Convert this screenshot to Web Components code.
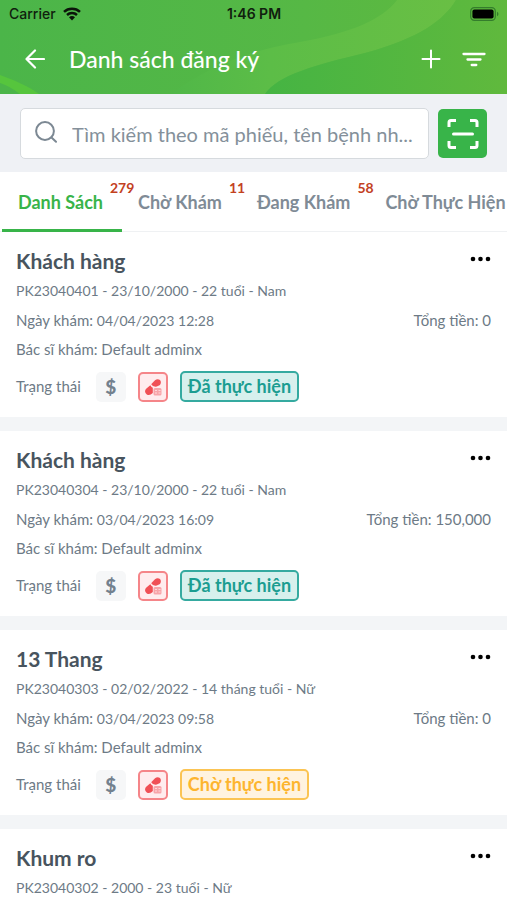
<!DOCTYPE html>
<html lang="vi">
<head>
<meta charset="utf-8">
<meta name="viewport" content="width=device-width, initial-scale=1">
<title>Danh sách đăng ký</title>
<style>
html, body { margin: 0; height: 100%; }
body { font-family: Lato, "Noto Sans", sans-serif; background: #f3f5f7; color: #6d7a86; overflow: hidden; }
</style>
</head>
<body>
<registration-screen></registration-screen>
<script>
const define = (name, html, setup) => {
  const template = document.createElement('template');
  template.innerHTML = html;
  customElements.define(name, class extends HTMLElement {
    constructor() {
      super();
      this.attachShadow({ mode: 'open' }).append(template.content.cloneNode(true));
    }
    connectedCallback() { if (setup) setup(this, this.shadowRoot); }
  });
};

define('status-bar', `
<style>
:host { display: grid; grid-template-columns: 1fr auto 1fr; align-items: center; height: 28px; padding: 0 8px 0 9px; font: 500 14px/28px Inter, sans-serif; color: #10200e; }
.left { display: flex; align-items: center; gap: 7px; }
.time { font-weight: 600; }
.battery { justify-self: end; }
svg { display: block; }
</style>
<span class="left"><span>Carrier</span>
<svg width="18" height="14" viewBox="0 0 18 14" aria-hidden="true"><g fill="none" stroke="#0b140a" stroke-width="2.5"><path d="M1 4.8C5.4.6 12.6.6 17 4.8"/><path d="M4 8c2.8-2.6 7.2-2.6 10 0"/></g><path d="M6 10.2c1.7-1.5 4.3-1.5 6 0L9 13.4z" fill="#0b140a"/></svg></span>
<span class="time">1:46 PM</span>
<svg class="battery" width="29" height="14" viewBox="0 0 29 14" aria-hidden="true"><rect x=".7" y=".7" width="24.6" height="12.6" rx="3.6" fill="none" stroke="#347d2c" stroke-width="1.2"/><rect x="2.4" y="2.4" width="21.2" height="9.2" rx="2" fill="#000"/><path d="M27 4.8c2 .8 2 3.6 0 4.4z" fill="#347d2c"/></svg>`);

define('app-header', `
<style>
:host { display: block; position: relative; height: 94px; overflow: hidden; color: #fff; background: linear-gradient(90deg, #4bb549, #56b845 60%, #60b93d); }
.art { position: absolute; inset: 0; width: 100%; height: 100%; }
status-bar, nav { position: relative; }
nav { display: flex; align-items: center; height: 62px; padding: 0 21px 0 25px; }
h1 { flex: 1; margin: 0 0 0 24px; font-size: 23px; line-height: 30px; font-weight: 500; }
button { display: block; border: 0; padding: 0; background: none; color: inherit; }
button + button { margin-left: 21px; }
svg { display: block; }
</style>
<svg class="art" viewBox="0 0 507 94" preserveAspectRatio="none" aria-hidden="true">
<defs><linearGradient id="band" x1="0" x2="1"><stop offset="0" stop-color="#50b748"/><stop offset=".35" stop-color="#5cbd47"/><stop offset="1" stop-color="#69bf44"/></linearGradient>
<linearGradient id="low" x1="0" x2="1"><stop offset="0" stop-color="#45b443"/><stop offset="1" stop-color="#60b93d"/></linearGradient></defs>
<path d="M170 94C205 70 240 52 300 42C350 33 382 20 397 0H456C444 20 420 38 365 53C315 65 278 75 265 94Z" fill="url(#band)"/>
<path d="M265 94C278 75 315 65 365 53C420 38 444 20 456 0H507V94Z" fill="url(#low)"/>
<path d="M0 75C14 80 28 86 39 94H20C12 88 6 85 0 83Z" fill="#56c53d"/>
</svg>
<status-bar></status-bar>
<nav>
<button aria-label="Quay lại"><svg width="20" height="20" viewBox="0 0 20 20" fill="none" stroke="#fff" stroke-width="2.2" stroke-linecap="round" stroke-linejoin="round"><path d="M19 10H2M10 1.5 1.5 10 10 18.500"/></svg></button>
<h1><slot></slot></h1>
<button aria-label="Thêm"><svg width="20" height="20" viewBox="0 0 20 20" stroke="#fff" stroke-width="2" stroke-linecap="round"><path d="M10 1.500V18.500M1.500 10H18.500"/></svg></button>
<button aria-label="Lọc"><svg width="24" height="20" viewBox="0 0 24 20" stroke="#fff" stroke-width="2.300" stroke-linecap="round"><path d="M1.500 5H22.500M5.500 10.500H18.500M9.700 16H14.300"/></svg></button>
</nav>`);

define('search-bar', `
<style>
:host { display: flex; gap: 9px; padding: 14px 20px 13px 20px; background: #eff1f5; }
label { flex: 1; min-width: 0; display: flex; align-items: center; gap: 15px; box-sizing: border-box; height: 51px; padding: 0 8px 0 14px; background: #fff; border: 1px solid #d6dade; border-radius: 5px; }
label svg { flex: none; margin-bottom: 4px; }
input { flex: 1; min-width: 0; border: 0; padding: 0; outline: 0; background: none; font: 400 20px/28px Lato, "Noto Sans", sans-serif; text-overflow: ellipsis; }
input::placeholder { color: #84909a; opacity: 1; }
button { display: grid; place-items: center; width: 49px; height: 49px; margin-top: 1px; border: 0; border-radius: 5px; padding: 0; background: #38b449; }
</style>
<label><svg width="22" height="22" viewBox="0 0 22 22" fill="none" stroke="#7c8893" stroke-width="2" stroke-linecap="round" aria-hidden="true"><circle cx="10" cy="10" r="8.900"/><path d="m16.500 16.500 4.500 4.300"/></svg>
<input type="text" aria-label="Tìm kiếm" placeholder="Tìm kiếm theo mã phiếu, tên bệnh nh..."></label>
<button aria-label="Quét mã"><svg width="32" height="32" viewBox="0 0 32 32" fill="none" stroke="#fff" stroke-width="3"><path d="M2 9V4.500Q2 2.500 4 2.500H9M23 2.500h5q2 0 2 2V9M30 23v4.500q0 2-2 2H23M9 29.500H4q-2 0-2-2V23"/><path d="M6.500 16H25.500" stroke-linecap="round"/></svg></button>`);

define('tab-item', `
<style>
:host { display: block; flex: none; }
button { display: block; height: 60px; border: 0; border-bottom: 3px solid transparent; padding: 0 19px 0 16px; background: none; font: 700 18px/60px Lato, "Noto Sans", sans-serif; color: #7f8b96; white-space: nowrap; }
:host([selected]) button { color: #38b449; border-color: #38b449; }
.label { position: relative; }
.count { position: absolute; left: 100%; bottom: 16px; margin-left: 7px; font: 700 14px/18px Lato, sans-serif; color: #c3411f; }
.count:empty { display: none; }
</style>
<button role="tab"><span class="label"><slot></slot><span class="count"></span></span></button>`,
(host, root) => {
  root.querySelector('.count').textContent = host.getAttribute('count') || '';
  root.querySelector('button').setAttribute('aria-selected', host.hasAttribute('selected'));
});

define('tab-strip', `
<style>:host { display: flex; flex: none; height: 60px; padding-left: 2px; overflow: hidden; background: #fff; box-shadow: inset 0 -1px #eff1f3; }</style><slot></slot>`);

define('status-badge', `
<style>
:host { display: block; box-sizing: border-box; height: 31px; padding: 0 6px; border: 2px solid #35aaa0; border-radius: 5px; background: #d7f0ed; color: #1b9d91; font-size: 18px; font-weight: 700; line-height: 27px; white-space: nowrap; }
:host([kind="waiting"]) { border-color: #fbc453; background: #fff3e0; color: #fdb52e; }
</style><slot></slot>`);

define('patient-card', `
<style>
:host { display: block; padding: 14px 16px 15px 16px; background: #fff; font-size: 15px; line-height: 29px; }
:host([summary]) { padding-bottom: 0; }
header, .visit, .status { display: flex; align-items: center; justify-content: space-between; }
h2 { margin: 0; font-size: 21px; line-height: 30px; font-weight: 700; color: #48545e; }
header button { display: block; border: 0; padding: 0 0 4px; background: none; }
svg { display: block; }
.info, .date { font-size: 14px; }
section { padding-top: 1px; }
.status { justify-content: flex-start; gap: 12px; margin-top: 7px; }
.status > span:first-child { margin-right: 3px; }
.icon { display: grid; place-items: center; box-sizing: border-box; width: 30px; height: 30px; border-radius: 5px; background: #f6f7f8; }
.pill { border: 2px solid #f58589; background: #ffecee; }
.dollar { font: 900 19px/30px Lato, sans-serif; color: #73818e; }
</style>
<header><h2><slot name="name"></slot></h2><button aria-label="Tùy chọn"><svg width="21" height="6" viewBox="0 0 21 6"><circle cx="3" cy="3" r="2.300"/><circle cx="10.500" cy="3" r="2.300"/><circle cx="18" cy="3" r="2.300"/></svg></button></header>
<div class="info"><slot name="info"></slot></div>
<section>
<div class="visit"><span>Ngày khám: <span class="date"><slot name="date"></slot></span></span><span>Tổng tiền: <slot name="total"></slot></span></div>
<div>Bác sĩ khám: <slot name="doctor"></slot></div>
<div class="status"><span>Trạng thái</span><span class="icon dollar">$</span>
<span class="icon pill"><svg width="18" height="18" viewBox="0 0 18 18" aria-hidden="true"><g fill="#f05056"><path d="M7.200 6.200 11 2.300Q13.500.2 16 2.100 17.800 4.300 16 7L12.800 8.500Q8.800 9.200 7.200 6.200Z"/><path d="M6.300 7.200Q7.500 9.300 8.800 9.800V15Q5.800 18 2.800 16.500-.2 14 1.900 11Z"/></g><rect x="9.500" y="10" width="8" height="7.500" rx="1.500" fill="#f7a4a9"/><path d="M11 12.500h2M14.500 12.500h2M11 15h2M14.500 15h2" stroke="#ffd8db"/></svg></span>
<slot name="badge"></slot></div>
</section>`,
(host, root) => { if (host.hasAttribute('summary')) root.querySelector('section')?.remove(); });

define('registration-screen', `
<style>
:host { display: flex; flex-direction: column; height: 100vh; overflow: hidden; }
app-header, search-bar { flex: none; }
main { flex: 1; min-height: 0; overflow: hidden; display: flex; flex-direction: column; gap: 14px; }
patient-card { flex: none; }
</style>
<app-header>Danh sách đăng ký</app-header>
<search-bar></search-bar>
<tab-strip role="tablist"><tab-item selected count="279">Danh Sách</tab-item><tab-item count="11">Chờ Khám</tab-item><tab-item count="58">Đang Khám</tab-item><tab-item>Chờ Thực Hiện</tab-item></tab-strip>
<main></main>`,
(host, root) => {
  const rows = [
    { name: 'Khách hàng', info: 'PK23040401 - 23/10/2000 - 22 tuổi - Nam', date: '04/04/2023 12:28', total: '0', kind: 'done' },
    { name: 'Khách hàng', info: 'PK23040304 - 23/10/2000 - 22 tuổi - Nam', date: '03/04/2023 16:09', total: '150,000', kind: 'done' },
    { name: '13 Thang', info: 'PK23040303 - 02/02/2022 - 14 tháng tuổi - Nữ', date: '03/04/2023 09:58', total: '0', kind: 'waiting' },
    { name: 'Khum ro', info: 'PK23040302 - 2000 - 23 tuổi - Nữ' },
  ];
  const labels = { done: 'Đã thực hiện', waiting: 'Chờ thực hiện' };
  const details = r => `<span slot="date">${r.date}</span><span slot="total">${r.total}</span><span slot="doctor">Default adminx</span><status-badge slot="badge" kind="${r.kind}">${labels[r.kind]}</status-badge>`;
  root.querySelector('main').innerHTML = rows.map(r => `<patient-card ${r.kind ? '' : 'summary'}><span slot="name">${r.name}</span><span slot="info">${r.info}</span>${r.kind ? details(r) : ''}</patient-card>`).join('');
});
</script>
</body>
</html>
